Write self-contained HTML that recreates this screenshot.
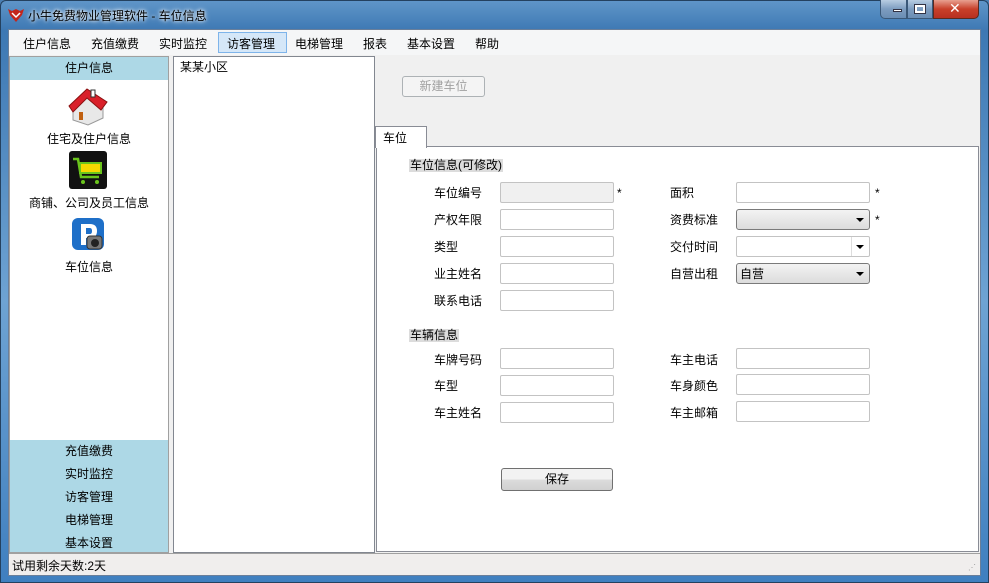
<!DOCTYPE html>
<html><head><meta charset="utf-8"><style>
*{margin:0;padding:0;box-sizing:border-box}
body{width:989px;height:583px;overflow:hidden;font-family:"Liberation Sans","Noto Sans CJK SC","WenQuanYi Zen Hei",sans-serif;font-size:12px;color:#000;background:#4a7fb3;position:relative}
.a{position:absolute}
.frame{left:0;top:0;width:989px;height:583px;background:linear-gradient(180deg,#5f95c8 0,#3d78b3 30px,#6ea3d3 300px,#3f7fbf 583px);border:1px solid #24415f;border-radius:6px 6px 0 0}
.client{left:8px;top:29px;width:973px;height:547px;background:#f0f0f0;border:1px solid #6a7f9a}
.title{left:28px;top:7px;font-size:12px;color:#000;text-shadow:0 0 6px #fff,0 0 3px #fff}
.menu span{position:absolute;top:5px}
.lbl{position:absolute}
.in{position:absolute;width:114px;height:21px;border:1px solid #c3c3c3;background:#fff;border-radius:2px}
.dd{position:absolute;width:134px;height:21px;border:1px solid #7a7a7a;border-radius:3px;background:linear-gradient(#f3f3f3,#dcdcdc)}
.arr{position:absolute;right:5px;top:8px;width:0;height:0;border-left:4px solid transparent;border-right:4px solid transparent;border-top:4px solid #000}
.side div{position:absolute;left:0;width:158px;text-align:center;height:23px;line-height:23px}
</style></head><body>
<div class="a frame"></div>
<!-- title bar -->
<svg class="a" style="left:7px;top:7px" width="18" height="16" viewBox="0 0 18 16"><path d="M1 2 L5 4 L9 2 L13 4 L17 2 L15 8 L9 15 L3 8 Z" fill="#c3261c"/><path d="M5 6 L9 10 L13 6" fill="none" stroke="#fff" stroke-width="1.5"/></svg>
<div class="a title">小牛免费物业管理软件 - 车位信息</div>
<!-- window buttons -->
<div class="a" style="left:880px;top:0;width:27px;height:19px;border:1px solid #3a5878;border-top:0;border-radius:0 0 0 5px;background:linear-gradient(#b8cde2,#7d9dc0 50%,#6a8db4)"></div>
<div class="a" style="left:893px;top:9px;width:9px;height:3px;background:#fff;border:1px solid #334"></div>
<div class="a" style="left:907px;top:0;width:26px;height:19px;border:1px solid #3a5878;border-top:0;background:linear-gradient(#b8cde2,#7d9dc0 50%,#6a8db4)"></div>
<div class="a" style="left:915px;top:5px;width:10px;height:8px;border:2px solid #fff;outline:1px solid #334"></div>
<div class="a" style="left:933px;top:0;width:46px;height:19px;border:1px solid #5a2a20;border-top:0;border-radius:0 0 5px 0;background:linear-gradient(#e8a090,#c8402a 50%,#b83020)"></div>
<div class="a" style="left:949px;top:1px;color:#fff;font-weight:bold;font-size:14px;font-family:'DejaVu Sans',sans-serif">✕</div>
<div class="a client"></div>
<!-- menu -->
<div class="a menu" style="left:9px;top:30px;width:971px;height:25px;background:#f5f6f7">
<div class="a" style="left:209px;top:2px;width:69px;height:21px;background:#d5e7f8;border:1px solid #7eb4ea"></div>
<span style="left:14px">住户信息</span><span style="left:82px">充值缴费</span><span style="left:150px">实时监控</span><span style="left:218px">访客管理</span><span style="left:286px">电梯管理</span><span style="left:354px">报表</span><span style="left:398px">基本设置</span><span style="left:466px">帮助</span>
</div>
<!-- left sidebar -->
<div class="a side" style="left:9px;top:56px;width:160px;height:497px;background:#fff;border:1px solid #a0a0a0">
<div style="top:0;background:#add8e6">住户信息</div>
<div style="top:71px;background:none">住宅及住户信息</div>
<div style="top:135px;background:none">商铺、公司及员工信息</div>
<div style="top:199px;background:none">车位信息</div>
<div style="top:383px;background:#add8e6">充值缴费</div>
<div style="top:406px;background:#add8e6">实时监控</div>
<div style="top:429px;background:#add8e6">访客管理</div>
<div style="top:452px;background:#add8e6">电梯管理</div>
<div style="top:475px;height:20px;line-height:23px;background:#add8e6;overflow:hidden">基本设置</div>
</div>
<!-- icons -->
<svg class="a" style="left:67px;top:86px" width="42" height="40" viewBox="0 0 42 40"><path d="M6 18 L6 34 L21 39 L36 32 L36 18 L21 10 Z" fill="#e8e8e8" stroke="#999"/><path d="M2 20 L20 3 L40 16 L34 24 L20 12 L6 26 Z" fill="#d9202a" stroke="#8a1010"/><rect x="24" y="4" width="4" height="7" fill="#fff" stroke="#333"/><rect x="12" y="26" width="4" height="8" fill="#c06010"/></svg>
<svg class="a" style="left:69px;top:151px" width="38" height="38" viewBox="0 0 38 38"><rect x="0" y="0" width="38" height="38" rx="3" fill="#111"/><path d="M4 8 L9 8 L12 26 L30 26" fill="none" stroke="#6ac41c" stroke-width="2.5"/><rect x="11" y="12" width="21" height="10" fill="#f5d800" stroke="#6ac41c" stroke-width="2"/><circle cx="14" cy="31" r="2" fill="#6ac41c"/><circle cx="28" cy="31" r="2" fill="#6ac41c"/></svg>
<svg class="a" style="left:72px;top:218px" width="33" height="33" viewBox="0 0 33 33"><rect x="0" y="0" width="32" height="32" rx="6" fill="#1e6fc8"/><path d="M9 6 L18 6 Q25 6 25 13 Q25 20 18 20 L14 20 L14 27 L9 27 Z M14 10 L14 16 L18 16 Q20 16 20 13 Q20 10 18 10 Z" fill="#fff"/><rect x="15" y="18" width="15" height="13" rx="3" fill="#777" stroke="#333"/><circle cx="23" cy="25" r="4" fill="#222"/></svg>
<!-- tree -->
<div class="a" style="left:173px;top:56px;width:202px;height:497px;background:#fff;border:1px solid #828790;padding:1px 6px">某某小区</div>
<!-- right area -->
<div class="a" style="left:402px;top:76px;width:83px;height:21px;border:1px solid #adb2b5;border-radius:3px;background:#f4f4f4;color:#a0a0a0;text-align:center;line-height:19px">新建车位</div>
<div class="a" style="left:376px;top:146px;width:603px;height:406px;background:#fff;border:1px solid #898c95"></div>
<div class="a" style="left:375px;top:126px;width:52px;height:22px;background:#fff;border:1px solid #898c95;border-bottom:none;padding:2px 7px">车位</div>
<div class="a" style="left:409px;top:159px;background:#dcdcdc;padding:0 1px;height:13px;line-height:13px">车位信息(可修改)</div>
<div class="lbl" style="left:434px;top:184px">车位编号</div><div class="in" style="left:500px;top:182px;background:#f0f0f0"></div><div class="lbl" style="left:617px;top:186px">*</div>
<div class="lbl" style="left:434px;top:211px">产权年限</div><div class="in" style="left:500px;top:209px"></div>
<div class="lbl" style="left:434px;top:238px">类型</div><div class="in" style="left:500px;top:236px"></div>
<div class="lbl" style="left:434px;top:265px">业主姓名</div><div class="in" style="left:500px;top:263px"></div>
<div class="lbl" style="left:434px;top:292px">联系电话</div><div class="in" style="left:500px;top:290px"></div>
<div class="lbl" style="left:670px;top:184px">面积</div><div class="in" style="left:736px;top:182px;width:134px"></div><div class="lbl" style="left:875px;top:186px">*</div>
<div class="lbl" style="left:670px;top:211px">资费标准</div><div class="dd" style="left:736px;top:209px"><div class="arr"></div></div><div class="lbl" style="left:875px;top:213px">*</div>
<div class="lbl" style="left:670px;top:238px">交付时间</div><div class="in" style="left:736px;top:236px;width:134px"><div style="position:absolute;left:114px;top:0;width:1px;height:19px;background:#ddd"></div><div class="arr"></div></div>
<div class="lbl" style="left:670px;top:265px">自营出租</div><div class="dd" style="left:736px;top:263px;padding:1px 3px">自营<div class="arr"></div></div>
<div class="a" style="left:409px;top:329px;background:#dcdcdc;padding:0 1px;height:13px;line-height:13px">车辆信息</div>
<div class="lbl" style="left:434px;top:351px">车牌号码</div><div class="in" style="left:500px;top:348px"></div>
<div class="lbl" style="left:434px;top:377px">车型</div><div class="in" style="left:500px;top:375px"></div>
<div class="lbl" style="left:434px;top:404px">车主姓名</div><div class="in" style="left:500px;top:402px"></div>
<div class="lbl" style="left:670px;top:351px">车主电话</div><div class="in" style="left:736px;top:348px;width:134px"></div>
<div class="lbl" style="left:670px;top:377px">车身颜色</div><div class="in" style="left:736px;top:374px;width:134px"></div>
<div class="lbl" style="left:670px;top:404px">车主邮箱</div><div class="in" style="left:736px;top:401px;width:134px"></div>
<div class="a" style="left:501px;top:468px;width:112px;height:23px;border:1px solid #707070;border-radius:3px;background:linear-gradient(#f2f2f2 50%,#dcdcdc 50%,#d0d0d0);text-align:center;line-height:21px">保存</div>
<!-- status -->
<div class="a" style="left:9px;top:553px;width:971px;height:22px;background:#f0eeed;border-top:1px solid #a0a0a0;padding:3px 3px">试用剩余天数:2天</div>
<div class="a" style="left:968px;top:563px;color:#999;font-size:8px;letter-spacing:-1px">⋰</div>
</body></html>
